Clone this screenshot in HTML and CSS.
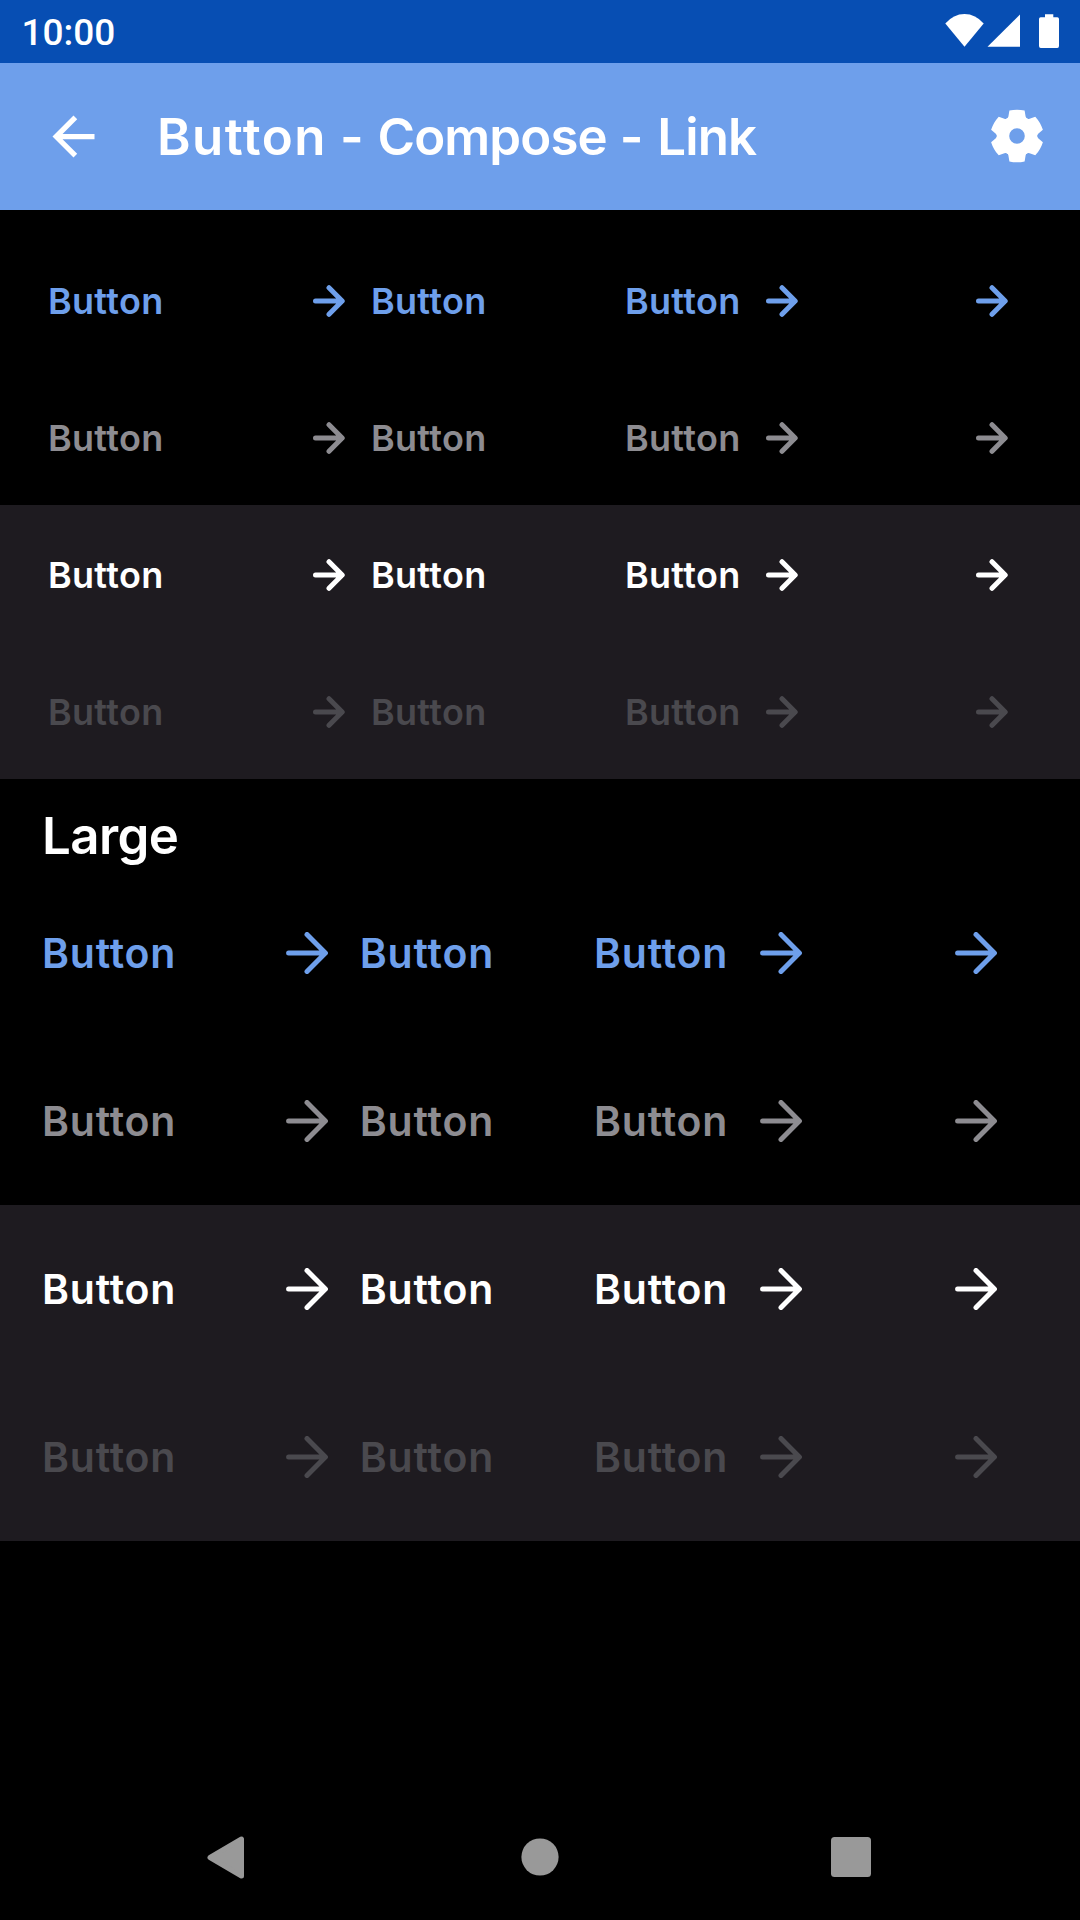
FILE: index.html
```
<!DOCTYPE html>
<html lang="en">
<head>
<meta charset="utf-8">
<title>Button - Compose - Link</title>
<link rel="stylesheet" href="styles.css">
</head>
<body>
<svg class="defs" width="0" height="0">
  <symbol id="arrow-small" viewBox="0 0 32 32"><path d="M2.5 16H29M16 2.7L29.2 16L16 29.3" fill="none" stroke="currentColor" stroke-width="5" stroke-linecap="round" stroke-linejoin="round"/></symbol>
  <symbol id="arrow-large" viewBox="0 0 42 42"><path d="M2.6 21H39M21 2.500L39.4 21L21 39.500" fill="none" stroke="currentColor" stroke-width="5" stroke-linecap="round" stroke-linejoin="round"/></symbol>
  <path id="tooth" d="M-12 -15.5Q-9 -17.5 -8.6 -19.5L-7.600 -25.500Q0 -27.200 7.600 -25.500L8.6 -19.5Q9 -17.5 12 -15.5Z"/>
</svg>
<div class="screen">
  <div class="status-bar">
    <span class="time">10:00</span>
    <svg class="status-icons" width="116" height="36" viewBox="0 0 116 36">
      <path d="M0.3 9.5Q8.5 0 19.5 0T38.7 9.5L19.5 32.7Z"/>
      <path d="M42.5 32.8L75 0.4V32.8Z"/>
      <path d="M100 0.2h8.3v3h4q1.7 0 1.7 1.8v27q0 2-1.7 2H95.800q-1.800 0-1.800-2V5q0-1.800 1.700-1.800h4.300Z"/>
    </svg>
  </div>
  <header class="app-bar">
    <svg class="back" width="63" height="63" viewBox="0 0 24 24"><path d="M20 11H7.830l5.590-5.590L12 4l-8 8 8 8 1.410-1.410L7.830 13H20v-2z"/></svg>
    <h1 class="title"><span class="wide">Button</span> <span class="dash">-</span> <span class="tight">Compose</span> <span class="dash">-</span> <span class="tight">Link</span></h1>
    <svg class="gear" width="54" height="54" viewBox="-27 -27 54 54">
      <circle r="14" fill="none" stroke="#fff" stroke-width="12.400"/>
      <use href="#tooth"/><use href="#tooth" transform="rotate(60)"/><use href="#tooth" transform="rotate(120)"/>
      <use href="#tooth" transform="rotate(180)"/><use href="#tooth" transform="rotate(240)"/><use href="#tooth" transform="rotate(300)"/>
    </svg>
  </header>
  <main>
    <section class="group small first">
      <div class="row primary">
        <span class="button">Button</span>
        <span class="button"><svg class="icon"><use href="#arrow-small"/></svg>Button</span>
        <span class="button">Button<svg class="icon"><use href="#arrow-small"/></svg></span>
        <span class="button"><svg class="icon"><use href="#arrow-small"/></svg></span>
      </div>
      <div class="row disabled">
        <span class="button">Button</span>
        <span class="button"><svg class="icon"><use href="#arrow-small"/></svg>Button</span>
        <span class="button">Button<svg class="icon"><use href="#arrow-small"/></svg></span>
        <span class="button"><svg class="icon"><use href="#arrow-small"/></svg></span>
      </div>
    </section>
    <section class="group small surface">
      <div class="row">
        <span class="button">Button</span>
        <span class="button"><svg class="icon"><use href="#arrow-small"/></svg>Button</span>
        <span class="button">Button<svg class="icon"><use href="#arrow-small"/></svg></span>
        <span class="button"><svg class="icon"><use href="#arrow-small"/></svg></span>
      </div>
      <div class="row disabled">
        <span class="button">Button</span>
        <span class="button"><svg class="icon"><use href="#arrow-small"/></svg>Button</span>
        <span class="button">Button<svg class="icon"><use href="#arrow-small"/></svg></span>
        <span class="button"><svg class="icon"><use href="#arrow-small"/></svg></span>
      </div>
    </section>
    <h2 class="heading">Large</h2>
    <section class="group large">
      <div class="row primary">
        <span class="button">Button</span>
        <span class="button"><svg class="icon"><use href="#arrow-large"/></svg>Button</span>
        <span class="button">Button<svg class="icon"><use href="#arrow-large"/></svg></span>
        <span class="button"><svg class="icon"><use href="#arrow-large"/></svg></span>
      </div>
      <div class="row disabled">
        <span class="button">Button</span>
        <span class="button"><svg class="icon"><use href="#arrow-large"/></svg>Button</span>
        <span class="button">Button<svg class="icon"><use href="#arrow-large"/></svg></span>
        <span class="button"><svg class="icon"><use href="#arrow-large"/></svg></span>
      </div>
    </section>
    <section class="group large surface">
      <div class="row">
        <span class="button">Button</span>
        <span class="button"><svg class="icon"><use href="#arrow-large"/></svg>Button</span>
        <span class="button">Button<svg class="icon"><use href="#arrow-large"/></svg></span>
        <span class="button"><svg class="icon"><use href="#arrow-large"/></svg></span>
      </div>
      <div class="row disabled">
        <span class="button">Button</span>
        <span class="button"><svg class="icon"><use href="#arrow-large"/></svg>Button</span>
        <span class="button">Button<svg class="icon"><use href="#arrow-large"/></svg></span>
        <span class="button"><svg class="icon"><use href="#arrow-large"/></svg></span>
      </div>
    </section>
  </main>
  <nav class="nav-bar">
    <svg width="37" height="43" viewBox="0 0 37 43"><path d="M3 21.500L34.500 3V40Z" stroke="#999" stroke-width="5" stroke-linejoin="round"/></svg>
    <svg width="38" height="38" viewBox="0 0 38 38"><circle cx="19" cy="19" r="18.600"/></svg>
    <svg width="40" height="40" viewBox="0 0 40 40"><rect width="40" height="40" rx="3.500"/></svg>
  </nav>
</div>
</body>
</html>
```
FILE: styles.css
```
body {
  margin: 0;
  background: #000;
  color: #fff;
  font-family: Inter, sans-serif;
  font-weight: 600;
}

.defs {
  display: block;
}

.screen {
  display: flex;
  flex-direction: column;
  width: 1080px;
  height: 1920px;
  overflow: hidden;
}

.status-bar {
  display: flex;
  justify-content: space-between;
  box-sizing: border-box;
  height: 63px;
  padding: 0 19px 0 21.5px;
  background: #074eb3;
}

.time {
  padding-top: 1px;
  font: 500 37px/63px Roboto, sans-serif;
}

.status-icons {
  margin-top: 14px;
  fill: #fff;
}

.app-bar {
  display: flex;
  align-items: center;
  box-sizing: border-box;
  height: 147px;
  padding: 0 36.5px 0 42px;
  background: #6e9feb;
  fill: #fff;
}

.title {
  flex: 1;
  margin: 0 0 0 52px;
  font-size: 51px;
  font-weight: 600;
  white-space: nowrap;
}

.wide {
  letter-spacing: 1.5px;
}

.dash {
  letter-spacing: 1px;
}

.tight {
  letter-spacing: -0.9px;
}

.gear {
  margin-bottom: 2px;
}

.row {
  display: grid;
  align-items: center;
  box-sizing: border-box;
}

.button {
  display: flex;
  align-items: center;
}

.small .row {
  grid-template-columns: 265px 312px 351px 1fr;
  height: 137px;
  padding: 3px 0 0 48px;
}

.small .button {
  gap: 26px;
  font-size: 36px;
  letter-spacing: 0.3px;
}

.small .icon {
  width: 32px;
  height: 32px;
}

.large .row {
  grid-template-columns: 244px 308px 360.5px 1fr;
  height: 168px;
  padding: 0 0 0 42px;
}

.large .button {
  gap: 31.8px;
  font-size: 41px;
  letter-spacing: 0.8px;
}

.large .icon {
  width: 42px;
  height: 42px;
}

.first {
  padding-top: 21px;
}

.surface {
  background: #1e1b20;
}

.primary {
  color: #6e9feb;
}

.disabled {
  color: #8d8c91;
}

.surface .disabled {
  color: #4a494e;
}

.heading {
  box-sizing: border-box;
  height: 90px;
  margin: 0;
  padding: 22px 0 0 42px;
  font-size: 51px;
  font-weight: 600;
  line-height: 69px;
  letter-spacing: -0.6px;
}

.nav-bar {
  display: grid;
  grid-template-columns: 314px 310px 1fr;
  align-items: center;
  height: 126px;
  margin-top: auto;
  padding-left: 207px;
  fill: #999;
}
```
